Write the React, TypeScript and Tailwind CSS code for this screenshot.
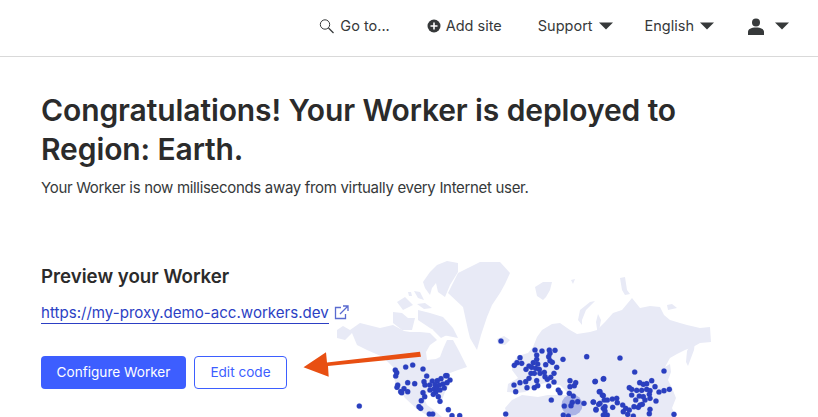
const dots: [number, number][] = [
[395.3,370],[396.7,372.7],[395.7,376],[405.7,367],[412.7,365],[423,369],[426.7,376],[397.7,385],[397,387.3],[407.7,382.7],[414.7,383.7],[400.7,391.7],[401.7,392.7],[404,388.7],[407.7,391.7],[424,381.7],[425,385],[429.7,385],[432.3,381],[437.3,380.7],[441,378.7],[445.7,375.7],[447,375.7],[450,380],[447,382.7],[443,384],[444.3,388],[439.3,385],[435,384.7],[430,390],[434,389],[436.7,388.3],[440,390],[435.7,392.3],[433.3,394.3],[438.3,396.7],[440,401.3],[423,392.7],[424.7,396.7],[421.3,400.7],[419,406.7],[420.7,408.3],[429.3,414],[432.7,414],[448.3,409.7],[452,415.7],[459.7,415.7],[359.3,406],[501,341],
[535,350],[542,351],[549.3,350],[555,350.3],[550,353.3],[536.7,355],[548.7,356.7],[536.7,359.3],[520,357.7],[550,360.7],[563,359.3],[517,362.7],[514.3,365.3],[521.7,363.3],[533.3,362.7],[537.7,364],[545.7,364.7],[552.3,362.3],[556.7,367.3],[554,373.3],[550.7,377.3],[526,369.3],[529,366],[531.7,367.3],[535.7,368.3],[539.3,369.3],[531,373.3],[534.3,373.3],[540,373.3],[544.3,372.3],[545,376.7],[547.3,379.3],[529,378.3],[525.7,381.7],[520,382.7],[514,385],[515.7,391.7],[527,387.7],[534.3,387.7],[536.7,380.7],[537.7,385.7],[548.7,386],[554,382],[558.3,390],[560,392.7],[551.3,400],[570,380.7],[570,386.7],[574.3,385.7],[575.7,382.7],[569.3,393.3],[573.3,396],[577.7,401.7],[584,403.3],[572.3,402.3],[571,405.7],[564.3,406],[563.3,415],[568.3,416],[595,381.7],[586.7,356.7],[603.3,379],[600,391.7],[602.3,395],[593.3,402],[600,403.3],[596,409.3],[603.3,408.3],[505.7,414],
[620,358],[664,371],[634.7,372],[595.3,381.3],[603.7,378.7],[639.7,382.7],[651.7,380.7],[646.7,383.7],[643.3,384.3],[655,386.7],[629.3,387.7],[631.7,389.3],[636.7,390.3],[641.7,390.3],[646.7,389.3],[650,390.7],[659,392],[664,390.7],[669.3,389.3],[631.7,395],[639.3,396],[643.3,396.7],[649.3,394.3],[650,398.3],[635.7,400],[645,400],[656,401],[640,405],[638.3,407.3],[642.3,404.3],[650,409.3],[649.3,413.7],[674,414.3],[599.3,391.7],[603.3,395.7],[604.3,400],[593.3,402],[598.7,404.3],[596,410],[605,406.7],[605,411],[603.3,415],[607.3,415],[607.3,400],[612.3,399],[616.7,398.3],[617.3,402.7],[612.7,407.3],[622.7,405],[625.7,408.3],[629.3,410],[634,406.7],[623.3,411.7],[627.7,414.3],[633.3,416],
];

const land: string[] = [
// North America
"337,330 343,326 350,330 360,323 372,326 380,328 393,325 404,331 410,332 420,332 430,333 437,340 430,345 426,352 427,360 436,359 440,357 443,349 447,340 453,340 459,351 467,367 458,370 450,373 450,383 445,392 442,400 436,392 428,393 424,398 427,405 434,410 442,417 430,417 418,410 405,398 395,383 393,367 383,357 367,350 357,345 352,333 345,340 337,338",
// Greenland
"458,273 468,268 480,262 500,262 510,273 505,284 500,293 492,305 487,317 481,335 477,350 470,338 468,330 463,307 448,293",
// Ellesmere
"423,282 430,272 437,265 447,261 458,263 458,272 450,285 445,297 438,292 436,283 432,288 430,295 425,288",
// Arctic islands
"397,302 405,297 413,305 403,310",
"393,312 402,313 408,318 415,318 412,330 402,330 393,323",
"414,291 420,292 424,300 418,298",
"408,292 411,292 412,296 409,296",
"418,310 430,313 443,317 453,328 458,338 443,335 430,328 418,320",
"417,304 425,303 432,308 424,309",
"433,330 440,325 447,335 441,338",
// Iceland
"497,339 504,336 510,340 505,345 498,344",
// Svalbard
"535,287 543,282 552,282 550,290 546,297 543,300 537,296",
"571,280 575,279 573,284",
// Novaya Zemlya
"578,320 580,310 590,302 595,301 586,310 582,320 582,325",
"620,278 625,277 627,290 630,294 625,295 622,290",
"667,305 672,304 677,308 668,310",
"596,322 598,314 601,320 598,336",
// Eurasia
"513,362 518,356 528,353 533,347 537,337 542,330 552,324 560,323 570,330 577,334 590,332 597,330 605,322 613,313 622,310 632,298 640,308 650,306 660,307 664,315 670,320 680,323 687,325 700,328 710,327 711,342 700,343 693,347 685,350 677,354 670,358 665,367 670,364 671,372 668,380 672,388 676,398 672,408 676,417 520,417 508,417 505,408 512,400 522,395 538,397 548,395 566,395 572,398 566,391 560,385 553,385 545,383 535,386 525,392 517,393 507,392 508,384 518,378 512,370",
// Sakhalin
"687,351 690,345 695,341 694,350 688,366 686,362",
];

function Caret() {
  return (
    <svg width="14" height="8" viewBox="0 0 14 8" className="shrink-0">
      <path d="M0 0.5h14L7 7.5z" fill="#36393a" />
    </svg>
  );
}

export default function App() {
  return (
    <div className="relative h-[417px] w-[818px] overflow-hidden bg-white font-['Inter',sans-serif] text-[#36393a]">
      <header className="flex h-[57px] items-center justify-end border-b border-[#d9d9d9] pr-[29px] pb-[4px] text-[14.5px]">
        <div className="flex items-center gap-[6px]">
          <svg width="15" height="16" viewBox="0 0 15 16" fill="none" stroke="#36393a" strokeWidth="1">
            <circle cx="6" cy="6.5" r="4.7" />
            <path d="M9.5 10l5 5" strokeWidth="1.2" />
          </svg>
          <span>Go to...</span>
        </div>
        <div className="ml-[37px] flex items-center gap-[5px]">
          <svg width="14" height="14" viewBox="0 0 14 14">
            <circle cx="7" cy="7" r="6.5" fill="#36393a" />
            <path d="M7 3.5v7M3.5 7h7" stroke="#fff" strokeWidth="1.6" />
          </svg>
          <span>Add site</span>
        </div>
        <div className="ml-[36px] flex items-center gap-[6px]">
          <span>Support</span>
          <Caret />
        </div>
        <div className="ml-[32px] flex items-center gap-[6px]">
          <span>English</span>
          <Caret />
        </div>
        <div className="ml-[33px] flex items-center gap-[10px]">
          <svg width="18" height="17" viewBox="0 0 18 17" fill="#36393a">
            <circle cx="9" cy="4.5" r="4" />
            <path d="M1 17v-3c0-3 3-4.5 8-4.5s8 1.500 8 4.500v3z" />
          </svg>
          <Caret />
        </div>
      </header>

      <main className="px-[41px] pt-[34px]">
        <h1 className="w-[700px] text-[30px] font-semibold leading-[39px] tracking-[-0.1px] text-[#2b2b2b]">
          Congratulations! Your Worker is deployed to Region: Earth.
        </h1>
        <p className="mt-[7px] text-[15px] leading-[24px] tracking-[-0.32px]">
          Your Worker is now milliseconds away from virtually every Internet user.
        </p>
        <h2 className="mt-[64px] text-[18.7px] font-semibold leading-[26px] text-[#2b2b2b]">Preview your Worker</h2>
        <div className="mt-[13px] flex items-center gap-[5px]">
          <a className="border-b border-[#2c3fc4] text-[15.1px] leading-[20px] text-[#2c3fc4]">
            https://my-proxy.demo-acc.workers.dev
          </a>
          <svg width="15" height="15" viewBox="0 0 15 15" fill="none" stroke="#5a6bd0" strokeWidth="1.300" className="mb-[2px]">
            <path d="M7 2.500H1.500v11h10V9" />
            <path d="M6 9l7.500-7.500M9 1h5v5" />
          </svg>
        </div>
        <div className="relative z-10 mt-[32px] flex gap-[8px] text-[13.6px]">
          <button className="h-[33px] w-[145px] rounded-[4px] bg-[#3d5eff] text-white">Configure Worker</button>
          <button className="h-[33px] w-[93px] rounded-[4px] border border-[#3d5eff] bg-white text-[#3d5eff]">Edit code</button>
        </div>
      </main>

      <svg className="absolute left-0 top-0" width="818" height="417" viewBox="0 0 818 417">
        {land.map((p, i) => (
          <polygon key={i} points={p} fill="#e8eaf6" />
        ))}
        <circle cx="572" cy="405" r="10.5" fill="#2c3fc4" fillOpacity="0.32" />
        {dots.map(([x, y], i) => (
          <circle key={i} cx={x} cy={y} r="2.600" fill="#2a3fbf" stroke="#2a3fbf" strokeOpacity="0.4" strokeWidth="0.6" />
        ))}
        <polygon
          points="303.500,367.300 326,352.300 327,362.500 420,351.800 421,356.800 328,366 328.700,376.700"
          fill="#e84f12"
        />
      </svg>
    </div>
  );
}
